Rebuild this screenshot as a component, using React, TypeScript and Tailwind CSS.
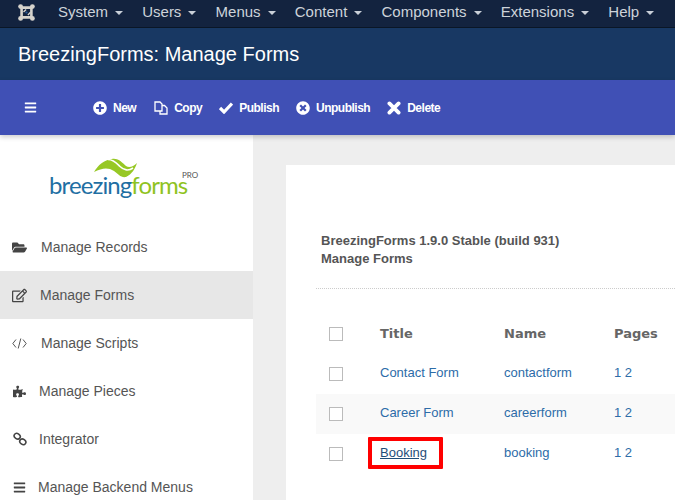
import React from "react";
import { FaFolderOpen, FaRegEdit, FaPuzzlePiece, FaBars, FaPlusCircle, FaTimesCircle } from "react-icons/fa";

function Caret() {
  return <span className="ml-[7px] inline-block h-0 w-0 border-x-[4px] border-t-[4px] border-x-transparent border-t-[#c9cfd8] align-middle" />;
}

function JoomlaLogo() {
  return (
    <svg width="17" height="17" viewBox="0 0 17 17" fill="none">
      <rect x="3.6" y="3.6" width="9.8" height="9.8" rx="1" stroke="#d6d3cc" strokeWidth="2.6" />
      <g fill="#d6d3cc">
        <circle cx="2.6" cy="2.6" r="2.4" />
        <circle cx="14.4" cy="2.6" r="2.4" />
        <circle cx="2.6" cy="14.4" r="2.4" />
        <circle cx="14.4" cy="14.4" r="2.4" />
        <path d="M5 7.6 7.6 5l1 1-2.6 2.6zM9.4 10.4 12 7.8l1 1L10.4 11.4z" />
      </g>
      <circle cx="8.5" cy="8.5" r="1.1" fill="#2a5a9a" />
    </svg>
  );
}

function CopyIcon() {
  return (
    <svg width="14" height="14" viewBox="0 0 14 14" fill="none" stroke="#fff" strokeWidth="1.3">
      <path d="M1 1h5l2 2v7H1z" />
      <path d="M8 4.5h2.5l2.5 2.5v6H6v-3" />
    </svg>
  );
}

function CheckIcon() {
  return (
    <svg width="14" height="12" viewBox="0 0 14 12" fill="none" stroke="#fff" strokeWidth="3.2">
      <path d="M1 6l4 4 8-8.5" />
    </svg>
  );
}

function XIcon() {
  return (
    <svg width="14" height="14" viewBox="0 0 14 14" fill="none" stroke="#fff" strokeWidth="3.8" strokeLinecap="round">
      <path d="M2.4 2.4l9.2 9.2M11.6 2.4l-9.2 9.2" />
    </svg>
  );
}

function CodeIcon() {
  return (
    <svg width="15" height="11" viewBox="0 0 15 11" fill="none" stroke="#555" strokeWidth="1">
      <path d="M4 1.5 0.8 5.5 4 9.5M11 1.5l3.2 4-3.2 4M8.8 0.5 6.2 10.5" />
    </svg>
  );
}

function ChainIcon() {
  return (
    <svg width="14" height="14" viewBox="0 0 14 14" fill="none" stroke="#444" strokeWidth="1.6">
      <ellipse cx="4.2" cy="4.2" rx="3.2" ry="2.6" transform="rotate(35 4.2 4.2)" />
      <ellipse cx="9.8" cy="9.8" rx="3.2" ry="2.6" transform="rotate(35 9.8 9.8)" />
    </svg>
  );
}

const navItems = ["System", "Users", "Menus", "Content", "Components", "Extensions", "Help"];

function Tool({ icon, label, className }: { icon: React.ReactNode; label: string; className: string }) {
  return (
    <div className={`flex items-center ${className}`}>
      <span className="flex w-[14px] justify-center">{icon}</span>
      <span className="ml-[6px] text-[12px] font-bold tracking-[-0.5px] text-white">{label}</span>
    </div>
  );
}

const side = [
  { icon: <FaFolderOpen size={15} />, label: "Manage Records", gap: "gap-[14px]" },
  { icon: <FaRegEdit size={15} />, label: "Manage Forms", gap: "gap-[13px]", active: true },
  { icon: <CodeIcon />, label: "Manage Scripts", gap: "gap-[14px]" },
  { icon: <FaPuzzlePiece size={13} />, label: "Manage Pieces", gap: "gap-[12px]" },
  { icon: <ChainIcon />, label: "Integrator", gap: "gap-[12px]" },
  { icon: <FaBars size={13} />, label: "Manage Backend Menus", gap: "gap-[11px]" },
];

function Check() {
  return <span className="block h-[14px] w-[14px] border border-[#bbb] bg-white" />;
}

const rows = [
  { title: "Contact Form", name: "contactform" },
  { title: "Career Form", name: "careerform", striped: true },
  { title: "Booking", name: "booking", boxed: true },
];

export default function App() {
  return (
    <div className="flex h-[500px] w-[675px] flex-col overflow-hidden bg-[#eeeeee] font-['Liberation_Sans',Arial,sans-serif]">
      <div className="flex h-[28px] shrink-0 items-center border-b border-[#0a1626] bg-[#13233f] pb-[3px] pl-[18px]">
        <JoomlaLogo />
        <div className="ml-[23px] flex gap-[19.2px]">
          {navItems.map((n) => (
            <span key={n} className="text-[15px] leading-[24px] text-[#cdd3da]">
              {n}
              <Caret />
            </span>
          ))}
        </div>
      </div>
      <div className="flex h-[52px] shrink-0 items-center bg-[#183863] pl-[18px]">
        <h1 className="text-[20px] font-normal text-white">BreezingForms: Manage Forms</h1>
      </div>
      <div className="z-10 flex h-[55px] shrink-0 items-center bg-[#4050b5] pl-[24px] shadow-[0_2px_5px_rgba(0,0,0,0.2)]">
        <FaBars size={13} color="#fff" />
        <Tool className="ml-[56px]" icon={<FaPlusCircle size={14} color="#fff" />} label="New" />
        <Tool className="ml-[18px]" icon={<CopyIcon />} label="Copy" />
        <Tool className="ml-[17px]" icon={<CheckIcon />} label="Publish" />
        <Tool className="ml-[17px]" icon={<FaTimesCircle size={14} color="#fff" />} label="Unpublish" />
        <Tool className="ml-[17px]" icon={<XIcon />} label="Delete" />
      </div>
      <div className="flex min-h-0 flex-1">
        <aside className="w-[253px] shrink-0 bg-white">
          <div className="h-[88px] pl-[49px] pt-[23px]">
            <div className="relative h-[46px] w-[150px]">
              <svg className="absolute left-[45px] top-0" width="45" height="20" viewBox="0 0 45 20">
                <path d="M0 14C4 7 10 2 18 1c7-1 10 4 14 7 3 2 7 1 11-3-2 6-5 11-11 14-5 1-8-3-12-6-6-4-12-3-20 1z" fill="#97c825" />
                <path d="M14 1.5c6 0 9 4 12 7 3 3 8 5 13 1.5" fill="none" stroke="#fff" strokeWidth="1.6" />
              </svg>
              <div className="absolute left-0 top-[13px] font-['Lato',sans-serif] text-[24px] leading-[28px] tracking-[-0.9px]">
                <span className="text-[#1f6fa3]">breezing</span>
                <span className="text-[#8fc31f]">forms</span>
              </div>
              <span className="absolute left-[133px] top-[12px] font-['Lato',sans-serif] text-[8px] leading-[10px] text-[#555]">PRO</span>
            </div>
          </div>
          {side.map((s) => (
            <div key={s.label} className={`flex h-[48px] items-center pl-[12px] ${s.gap} ${s.active ? "bg-[#e7e7e7]" : ""}`}>
              <span className="flex w-[15px] justify-center text-[#444]">{s.icon}</span>
              <span className="text-[14px] text-[#555]">{s.label}</span>
            </div>
          ))}
        </aside>
        <main className="min-w-0 flex-1 pl-[33px] pt-[30px]">
          <div className="h-full bg-white pl-[30px] pt-[67px]">
            <div className="border-b border-dotted border-[#ccc] pb-[20px] pl-[5px] text-[13px] font-bold leading-[18px] text-[#555]">
              <div>BreezingForms 1.9.0 Stable (build 931)</div>
              <div>Manage Forms</div>
            </div>
            <div className="mt-[25px] flex h-[40px] items-center font-['DejaVu_Sans',sans-serif] text-[13px] font-bold text-[#666]">
              <span className="flex w-[64px] justify-center pr-[24px]"><Check /></span>
              <span className="w-[124px]">Title</span>
              <span className="w-[110px]">Name</span>
              <span>Pages</span>
            </div>
            {rows.map((r) => (
              <div key={r.name} className={`flex h-[40px] items-center text-[13px] text-[#2d6ca8] ${r.striped ? "bg-[#f9f9f9]" : ""}`}>
                <span className="flex w-[64px] justify-center pr-[24px]"><Check /></span>
                <span className="w-[124px] pb-[3px]">
                  {r.boxed ? (
                    <span className="relative inline-block">
                      <span className="text-[#1f4e79] underline">{r.title}</span>
                      <span className="absolute -left-[12px] -right-[16px] -top-[6px] -bottom-[7px] rounded-[1px] border-[4px] border-[#ff0000]" />
                    </span>
                  ) : r.title}
                </span>
                <span className="w-[110px] pb-[3px]">{r.name}</span>
                <span className="pb-[3px]">1 2</span>
              </div>
            ))}
          </div>
        </main>
      </div>
    </div>
  );
}
